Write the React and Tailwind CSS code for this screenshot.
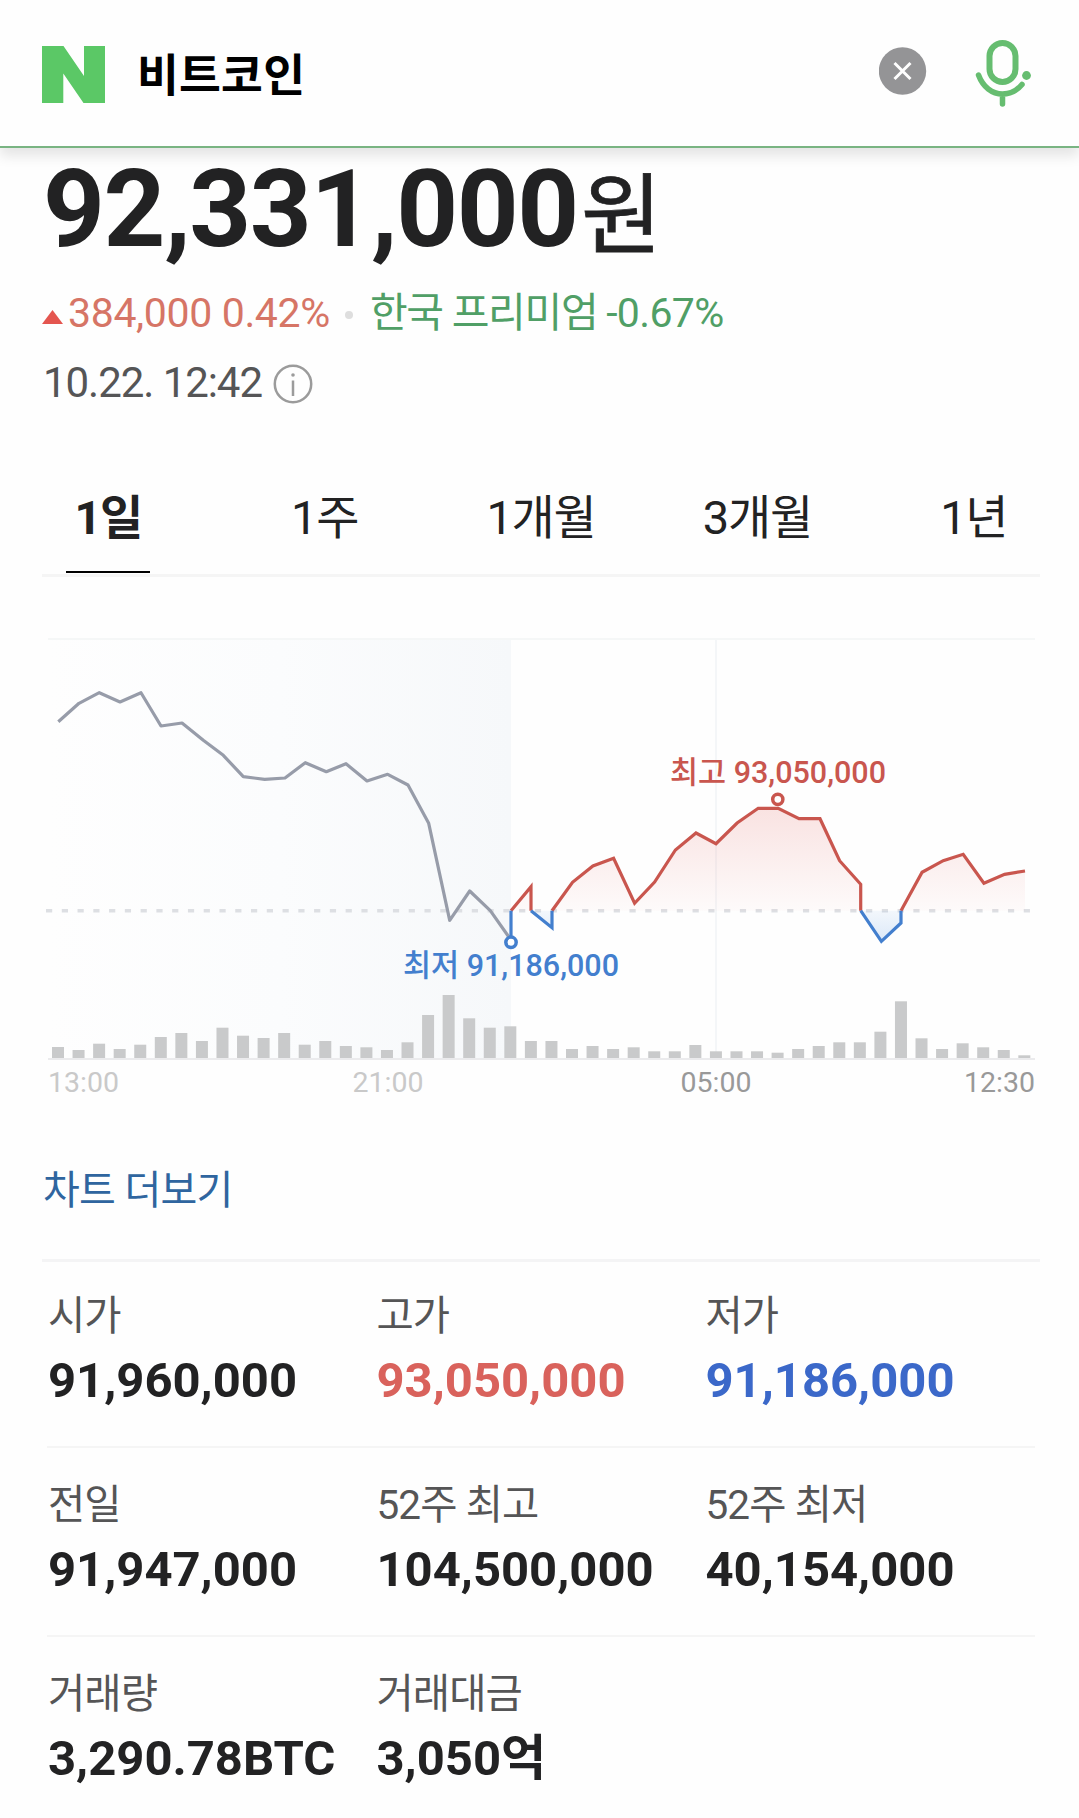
import React, { useState } from 'react';
import clsx from 'clsx';

const TABS = ['1일', '1주', '1개월', '3개월', '1년'];

const STATS = [
    [
        { label: '시가', value: '91,960,000' },
        { label: '고가', value: '93,050,000', color: 'text-[#d9625c]' },
        { label: '저가', value: '91,186,000', color: 'text-[#3b68c9]' },
    ],
    [
        { label: '전일', value: '91,947,000' },
        { label: '52주 최고', value: '104,500,000' },
        { label: '52주 최저', value: '40,154,000' },
    ],
    [
        { label: '거래량', value: '3,290.78BTC' },
        { label: '거래대금', value: '3,050억' },
    ],
];

// Chart geometry
const BASE_Y = 333.7;
const FLOOR_Y = 481;

const PREV_DAY = '58.3,144.7 79,126.3 99.3,115.7 120,125 141,115.7 161,149 182,146 203.3,163.3 223.3,178.3 243.3,199.7 264.7,202.3 285,201 305.3,185.7 326.3,194.7 346,186.7 367,204 387.7,197.3 408,208 428.7,246.3 449.7,343.3 469.7,314 490.3,333.7 511,363';

const UP_SEGMENTS = [
    '511,333.7 531,309.7 531,333.7',
    '552,333.7 572.5,305.3 592.9,289 613.6,281.3 634.6,326.3 654.6,305 675.4,273 696,256 716,266.7 737.1,246 758.2,231.3 778.2,231.3 799,241.7 820,241.7 839.6,283.7 860.7,307.3 860.7,333.7',
    '901,333.7 922.1,295.3 943.2,283.7 963.2,277.3 983.9,306.3 1004.6,297.3 1025,294',
];

const DOWN_SEGMENTS = [
    '511,361 511,333.7',
    '531,333.7 552,350.7 552,333.7',
    '860.7,333.7 881.4,364.3 901,346 901,333.7',
];

const VOLUMES = [
    11, 8, 14.3, 9, 13.3, 21, 25, 17, 30.3, 22.3, 20, 25, 13.3, 17, 12, 10.7,
    8, 15.7, 43, 63, 39.7, 30.3, 31.7, 17, 17, 9, 12, 9, 10.7, 6.7, 6.7, 13,
    6.7, 6.7, 6.7, 5.3, 9, 12, 15.7, 15.7, 26.3, 56.7, 19.7, 9, 14.7, 10.7, 8, 2.7,
];

const HOURS = [
    { x: 83.5, text: '13:00', fill: '#c9c9c9' },
    { x: 388, text: '21:00', fill: '#c9c9c9' },
    { x: 716, text: '05:00', fill: '#999999' },
    { x: 999.5, text: '12:30', fill: '#999999' },
];

/**
 * Component: Search Header
 */
const SearchHeader = () => (
    <header className="relative z-10 flex items-center h-[148px] border-b-2 border-[#79b482] bg-[#fefefe] shadow-[0_8px_12px_rgba(0,0,0,0.1)]">
        <svg className="ml-[42px] mt-[3px] shrink-0" width="63" height="57" viewBox="0 0 63 57">
            <path d="M0 0H21.5L42 30V0H63V57H41.5L21.3 27.5V57H0Z" fill="#5bc866" />
        </svg>
        <span className="ml-[32px] mt-[7px] flex-1 text-[45.500px] leading-[60px] font-bold tracking-[0.200px] text-black">비트코인</span>
        <button className="mt-[-4px] shrink-0" aria-label="clear">
            <svg width="48" height="48" viewBox="0 0 48 48">
                <circle cx="23.5" cy="24" r="23.7" fill="#949496" />
                <path d="M15.500 16L31.500 32M31.500 16L15.500 32" stroke="#fff" strokeWidth="3" />
            </svg>
        </button>
        <button className="ml-[46px] mr-[46px] mt-[-1px] shrink-0" aria-label="voice">
            <svg width="60" height="70" viewBox="0 0 60 70" fill="none" stroke="#66bd70" strokeWidth="6" strokeLinecap="round">
                <rect x="16.5" y="5" width="26" height="39" rx="13" />
                <path d="M5.500 37C10 49 19 56 29.500 56C38 56 44.500 52 49 46.500M29.500 56V66" strokeWidth="5.500" />
                <circle cx="53.500" cy="37.500" r="4.400" fill="#66bd70" stroke="none" />
            </svg>
        </button>
    </header>
);

/**
 * Component: Price Chart
 */
const PriceChart = () => (
    <svg className="block" width="1079" height="533" viewBox="0 0 1079 533">
        <defs>
            <linearGradient id="prevBg" x1="0" x2="1" y1="0" y2="0">
                <stop offset="0" stopColor="#fefefe" />
                <stop offset="0.5" stopColor="#fbfcfd" />
                <stop offset="1" stopColor="#f6f8fa" />
            </linearGradient>
            <linearGradient id="upFill" gradientUnits="userSpaceOnUse" x1="0" x2="0" y1="231" y2="334">
                <stop offset="0" stopColor="#e0504a" stopOpacity="0.16" />
                <stop offset="1" stopColor="#e0504a" stopOpacity="0.02" />
            </linearGradient>
            <linearGradient id="downFill" gradientUnits="userSpaceOnUse" x1="0" x2="0" y1="334" y2="364">
                <stop offset="0" stopColor="#3f86dc" stopOpacity="0.06" />
                <stop offset="1" stopColor="#3f86dc" stopOpacity="0.18" />
            </linearGradient>
        </defs>

        {/* Grid */}
        <rect x="48" y="62" width="463" height="419" fill="url(#prevBg)" />
        <rect x="48" y="61" width="987" height="2" fill="#f5f7f7" />
        <rect x="715" y="63" width="2" height="418" fill="#f4f6f8" />
        <rect x="48" y="481" width="987" height="2" fill="#ebebed" />
        <line x1="46" x2="1030" y1={BASE_Y} y2={BASE_Y} stroke="#dddfe3" strokeWidth="3.600" strokeDasharray="6.2 9.570" />

        {/* Volume */}
        {VOLUMES.map((v, i) => (
            <rect key={i} x={52 + i * 20.56} y={FLOOR_Y - v} width="12" height={v} fill="#c9cacb" />
        ))}

        {/* Price lines */}
        <polyline points={PREV_DAY} fill="none" stroke="#979ca9" strokeWidth="3.200" strokeLinejoin="round" />
        {UP_SEGMENTS.map((points) => (
            <g key={points}>
                <polygon points={`${points} ${points.split(' ').pop().split(',')[0]},${BASE_Y}`} fill="url(#upFill)" />
                <polyline points={points} fill="none" stroke="#c9564e" strokeWidth="3.200" />
            </g>
        ))}
        {DOWN_SEGMENTS.map((points) => (
            <polyline key={points} points={points} fill="url(#downFill)" stroke="#437fce" strokeWidth="3.200" />
        ))}

        {/* High / low markers */}
        <circle cx="511" cy="365.300" r="5.200" fill="#fff" stroke="#437fce" strokeWidth="3.500" />
        <circle cx="777.800" cy="222.300" r="5.100" fill="#fff" stroke="#c9564e" strokeWidth="3.500" />
        <text x="511" y="399" textAnchor="middle" fill="#437fce" className="text-[30.500px] font-medium">최저 91,186,000</text>
        <text x="778" y="206" textAnchor="middle" fill="#c9564e" className="text-[30.500px] font-medium">최고 93,050,000</text>

        {HOURS.map(({ x, text, fill }) => (
            <text key={text} x={x} y="514.500" textAnchor="middle" fill={fill} className="text-[28.500px]">{text}</text>
        ))}
    </svg>
);

export default function App() {
    const [activeTab, setActiveTab] = useState('1일');

    return (
        <div className="w-[1079px] h-[1818px] overflow-hidden bg-[#fefefe] font-[Roboto,'Noto_Sans_CJK_KR',sans-serif] text-[#222223]">
            <SearchHeader />

            {/* Price summary */}
            <section className="pl-[43px] pt-[11px]">
                <div className="flex items-baseline h-[101px] leading-[100px]">
                    <strong className="text-[108px] font-bold tracking-[-1.400px]">92,331,000</strong>
                    <span className="ml-[3px] text-[88px] [-webkit-text-stroke:0.8px_#222223]">원</span>
                </div>
                <div className="mt-[23px] flex items-center text-[41px] leading-[60px]">
                    <svg className="-ml-px mt-[7px] mr-[5px]" width="21" height="14" viewBox="0 0 21 14">
                        <path d="M10.500 0L21 14H0Z" fill="#e4554f" />
                    </svg>
                    <span className="tracking-[-0.350px] text-[#d67566]">384,000 0.42%</span>
                    <span className="ml-[15px] mr-[17px] mt-[4px] size-2 rounded-full bg-[#dedede]" />
                    <span className="tracking-[-1.300px] text-[#509f66]">한국 프리미엄 <span className="tracking-[-0.650px]">-0.67%</span></span>
                </div>
                <div className="mt-[10px] flex items-center text-[42px] leading-[60px] tracking-[-1.050px] text-[#555556]">
                    <span>10.22. 12:42</span>
                    <svg className="ml-[11px] mt-[1px]" width="40" height="40" viewBox="0 0 40 40" fill="none" stroke="#9b9b9b" strokeWidth="2.500">
                        <circle cx="20" cy="20" r="18.200" />
                        <path d="M20 16.500V32" />
                        <circle cx="20" cy="11" r="1.800" fill="#9b9b9b" stroke="none" />
                    </svg>
                </div>
            </section>

            {/* Period tabs */}
            <nav className="mt-[70px] flex">
                {TABS.map((tab) => (
                    <button
                        key={tab}
                        onClick={() => setActiveTab(tab)}
                        className="flex w-[216.400px] shrink-0 justify-center"
                    >
                        <span
                            className={clsx(
                                'flex justify-center w-[84px] pb-[18px] border-b-2 text-[47px] leading-[70px] tracking-[-1.300px] whitespace-nowrap',
                                tab === activeTab ? 'border-black font-bold' : 'border-transparent'
                            )}
                        >
                            {tab}
                        </span>
                    </button>
                ))}
            </nav>
            <div className="ml-[42px] mr-[39px] mt-px h-[3px] bg-[#f5f5f5]" />

            <PriceChart />

            <a className="block mt-[51px] ml-[43px] text-[40px] leading-[60px] tracking-[-0.700px] text-[#2f659f]">차트 더보기</a>
            <div className="ml-[42px] mr-[39px] mt-[38px] h-[3px] bg-[#f4f4f5]" />

            {/* Stats */}
            <section className="ml-[47px] mr-[44px] -mt-[3px]">
                {STATS.map((row, i) => (
                    <dl key={i} className="grid grid-cols-[328.500px_329px_1fr] pl-px pt-[32px] pb-[35px] border-b-2 border-[#f5f5f5] last:border-b-0">
                        {row.map(({ label, value, color }) => (
                            <div key={label}>
                                <dt className="text-[40.500px] leading-[50px] tracking-[-0.900px] text-[#555556]">{label}</dt>
                                <dd className={clsx('mt-[10px] text-[49px] leading-[60px] font-bold whitespace-nowrap', color)}>{value}</dd>
                            </div>
                        ))}
                    </dl>
                ))}
            </section>
        </div>
    );
}
